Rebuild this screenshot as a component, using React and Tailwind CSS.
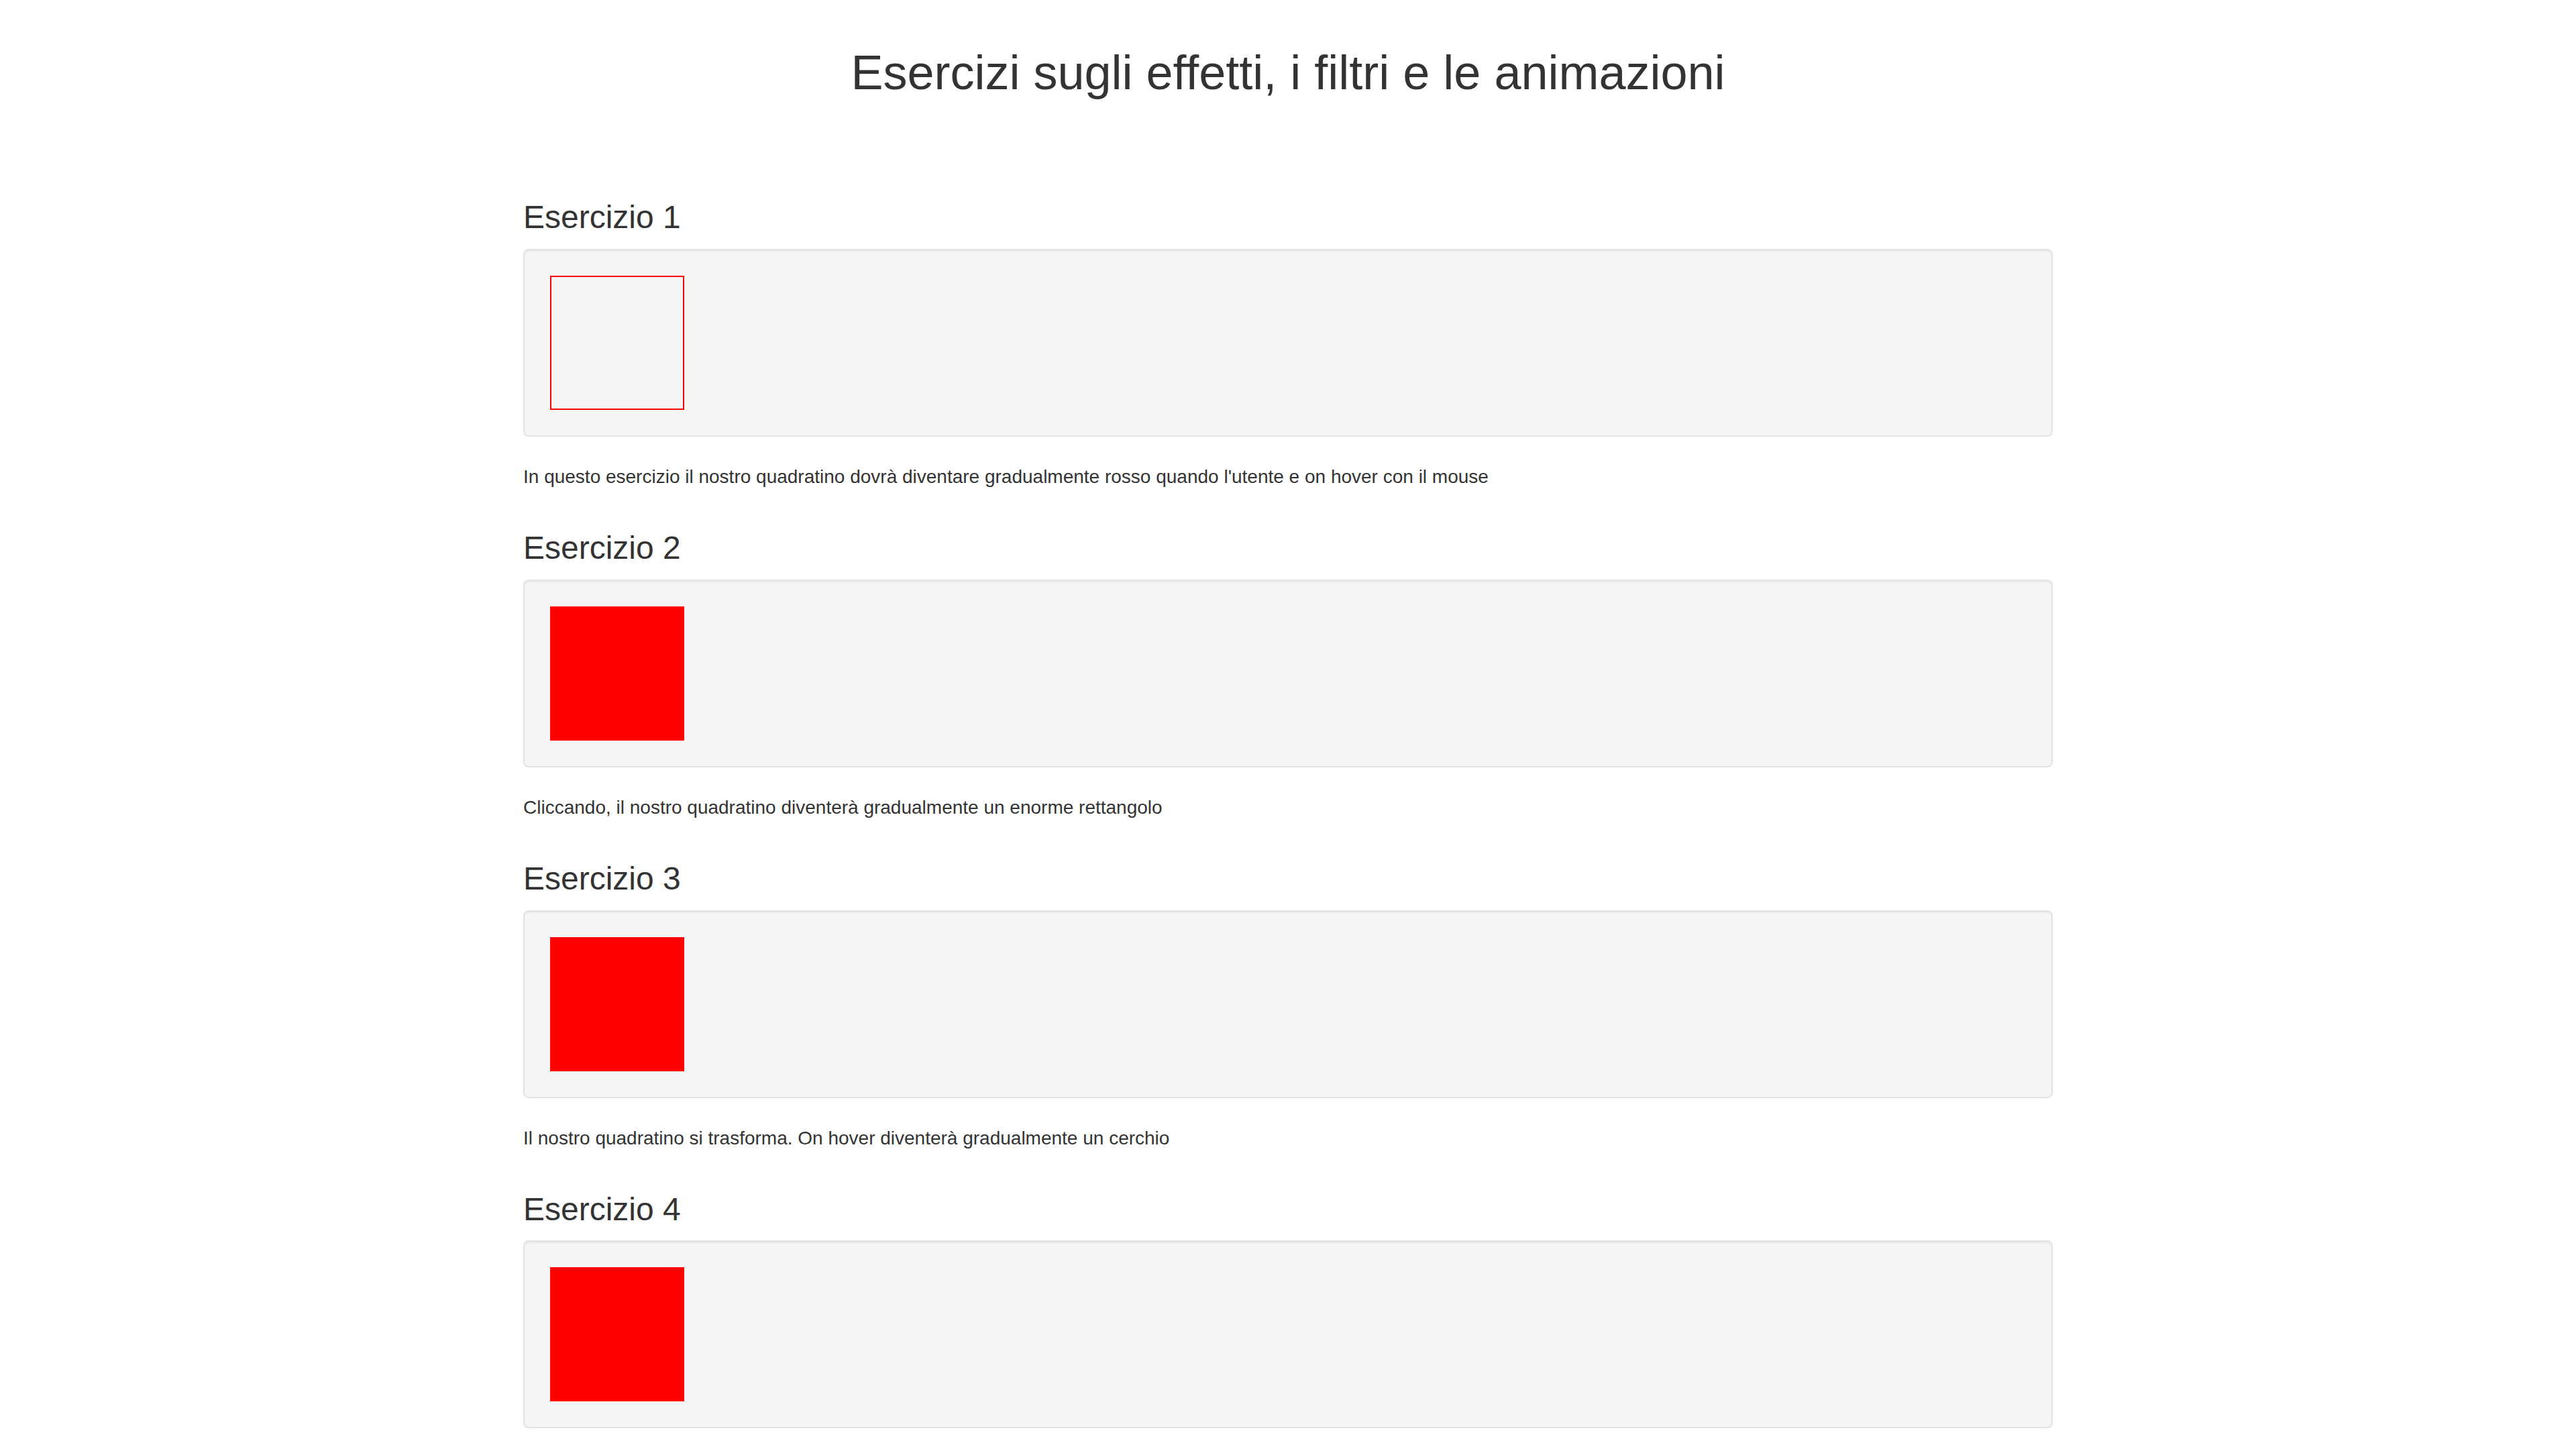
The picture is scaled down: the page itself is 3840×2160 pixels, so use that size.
const esercizi = [
  {
    title: "Esercizio 1",
    box: "border-2 border-[#ff0000]",
    text: "In questo esercizio il nostro quadratino dovrà diventare gradualmente rosso quando l'utente e on hover con il mouse",
  },
  {
    title: "Esercizio 2",
    box: "bg-[#ff0000]",
    text: "Cliccando, il nostro quadratino diventerà gradualmente un enorme rettangolo",
  },
  {
    title: "Esercizio 3",
    box: "bg-[#ff0000]",
    text: "Il nostro quadratino si trasforma. On hover diventerà gradualmente un cerchio",
  },
  {
    title: "Esercizio 4",
    box: "bg-[#ff0000]",
    text: "",
  },
];

function Esercizio({ title, box, text }) {
  return (
    <section>
      <h3 className="mb-[20px] text-[48px] leading-[52.8px] font-normal">{title}</h3>
      <div className="mb-[40px] rounded-[8px] border-2 border-[#e3e3e3] bg-[#f5f5f5] p-[38px] shadow-[inset_0_2px_2px_rgba(0,0,0,0.05)]">
        <div className={`h-[200px] w-[200px] ${box}`}></div>
      </div>
      {text && (
        <p className="pb-[60px] text-[28px] leading-[40px]">{text}</p>
      )}
    </section>
  );
}

export default function App() {
  return (
    <div className="min-h-screen bg-white font-['Liberation_Sans',Arial,sans-serif] text-[#333333]">
      <div className="mx-auto w-[2280px] pt-[69px]">
        <h1 className="mb-[150px] text-center text-[72px] leading-[79.2px] font-normal">
          Esercizi sugli effetti, i filtri e le animazioni
        </h1>
        {esercizi.map((e) => (
          <Esercizio key={e.title} {...e} />
        ))}
      </div>
    </div>
  );
}
